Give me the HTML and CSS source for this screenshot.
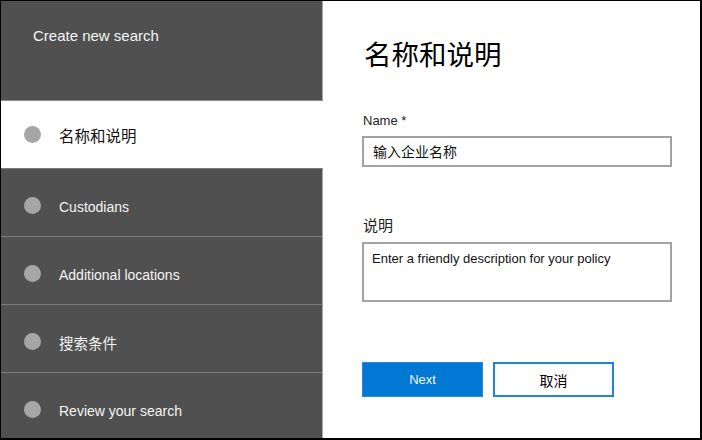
FILE: index.html
```html
<!DOCTYPE html>
<html lang="zh-CN">
<head>
<meta charset="utf-8">
<title>Create new search</title>
<link rel="stylesheet" href="styles.css">
</head>
<body>
<div class="frame">
  <nav class="sidebar">
    <div class="side-header">Create new search</div>
    <div class="step step-active"><span class="dot"></span><span class="step-label cjk-lg">名称和说明</span></div>
    <div class="step"><span class="dot"></span><span class="step-label">Custodians</span></div>
    <div class="step"><span class="dot"></span><span class="step-label">Additional locations</span></div>
    <div class="step"><span class="dot"></span><span class="step-label cjk">搜索条件</span></div>
    <div class="step"><span class="dot"></span><span class="step-label">Review your search</span></div>
  </nav>
  <main class="panel">
    <h1 class="title">名称和说明</h1>
    <label class="label label-name">Name *</label>
    <div class="input">输入企业名称</div>
    <label class="label label-desc">说明</label>
    <div class="textarea">Enter a friendly description for your policy</div>
    <div class="actions">
      <button class="btn btn-primary">Next</button>
      <button class="btn btn-secondary">取消</button>
    </div>
  </main>
</div>
</body>
</html>
```

FILE: styles.css
```css
* { box-sizing: border-box; }
html, body { margin: 0; padding: 0; background: #fff; }
body {
  font-family: "Liberation Sans", Arial, "Noto Sans CJK SC", sans-serif;
  width: 702px;
  height: 440px;
  overflow: hidden;
}
.frame {
  width: 702px;
  height: 440px;
  border-style: solid;
  border-color: #000;
  border-width: 1px 2px 2px 1px;
  display: flex;
  overflow: hidden;
}
.sidebar {
  width: 322px;
  flex: none;
  display: flex;
  flex-direction: column;
  background: #505050;
}
.side-header {
  height: 100px;
  flex: none;
  border-bottom: 1px solid #8c8c8c;
  border-right: 1px solid #a8a8a8;
  color: #f4f4f4;
  font-size: 15px;
  line-height: 18px;
  padding: 26px 0 0 32px;
}
.step {
  height: 68px;
  flex: none;
  display: flex;
  align-items: center;
  gap: 18px;
  padding: 9px 0 0 23px;
  border-top: 1px solid #7a7a7a;
  border-right: 1px solid #a8a8a8;
  color: #f4f4f4;
  font-size: 14px;
  line-height: 18px;
}
.step-active {
  height: 67px;
  padding-top: 0;
  border-top: none;
  border-right: 1px solid #fff;
  background: #fff;
  color: #111;
}
.dot {
  width: 17px;
  height: 17px;
  border-radius: 50%;
  background: #a6a6a6;
  flex: none;
  margin-bottom: 4px;
}
.step-active .dot { margin-bottom: 0; }
.cjk { font-size: 14.5px; font-family: "Noto Sans CJK SC", sans-serif; }
.cjk-lg { font-size: 15.5px; font-family: "Noto Sans CJK SC", sans-serif; }
.panel {
  flex: 1;
  display: flex;
  flex-direction: column;
  align-items: flex-start;
  padding: 32px 0 0 39px;
  color: #000;
}
.title {
  margin: 0;
  font-family: "Noto Sans CJK SC", sans-serif;
  font-weight: 400;
  font-size: 27.5px;
  line-height: 40px;
  margin-left: 2px;
}
.label {
  display: block;
  color: #222;
}
.label-name {
  margin-top: 40px;
  font-size: 13px;
  line-height: 16px;
  margin-left: 1px;
}
.label-desc {
  margin-top: 48px;
  font-size: 15px;
  line-height: 20px;
  font-family: "Noto Sans CJK SC", sans-serif;
  margin-left: 1px;
}
.input {
  margin-top: 7px;
  width: 310px;
  height: 31px;
  border: 2px solid #a2a2a2;
  padding: 0 0 0 9px;
  font-family: "Noto Sans CJK SC", sans-serif;
  font-size: 14px;
  line-height: 27px;
  color: #111;
}
.textarea {
  margin-top: 7px;
  width: 310px;
  height: 60px;
  border: 2px solid #a2a2a2;
  padding: 6px 0 0 8px;
  font-size: 13px;
  line-height: 18px;
  color: #111;
}
.actions {
  margin-top: 60px;
  display: flex;
  gap: 10px;
}
.btn {
  height: 35px;
  font-size: 13px;
  font-family: "Liberation Sans", Arial, "Noto Sans CJK SC", sans-serif;
  cursor: pointer;
  padding: 0;
}
.btn-primary {
  width: 121px;
  background: #0078d4;
  border: 1px solid #2a88d8;
  color: #f2f6fb;
}
.btn-secondary {
  width: 121px;
  background: #fff;
  border: 2px solid #1f85d8;
  color: #000;
  font-family: "Noto Sans CJK SC", sans-serif;
  font-size: 14px;
}
```
